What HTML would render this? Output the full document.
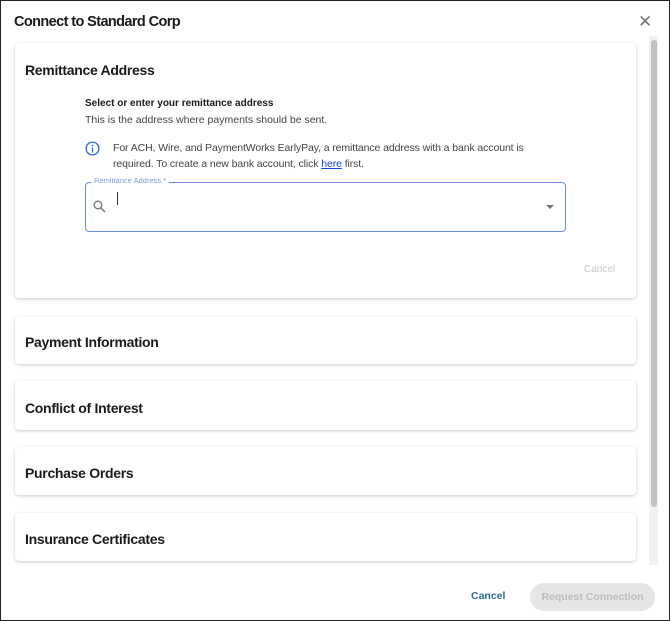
<!DOCTYPE html><html><head><style>
*{box-sizing:border-box;margin:0;padding:0}
body{width:670px;height:621px;background:#fff;font-family:"Liberation Sans",sans-serif;position:relative;overflow:hidden;color:#1a1a1a}
.frame{position:absolute;left:0;top:0;width:670px;height:621px;border:1px solid #222;pointer-events:none}
.t{position:absolute;left:14px;top:14px;font-size:14.5px;font-weight:bold;letter-spacing:-0.6px}
.x{position:absolute;left:638px;top:12px;font-size:17px;color:#777}
.card{position:absolute;left:15px;width:621px;background:#fff;border-radius:4px;box-shadow:0 1px 3px rgba(0,0,0,.22)}
.card h2{font-size:14px;font-weight:bold;position:absolute;left:10px;letter-spacing:-0.3px}
.s{position:absolute;font-size:10.5px}
.track{position:absolute;left:649px;top:36px;width:9px;height:529px;background:#f1f1f1}
.thumb{position:absolute;left:651px;top:40px;width:6px;height:467px;background:#c1c1c1;border-radius:3px}
</style></head><body>
<div class="t">Connect to Standard Corp</div>
<div class="x">✕</div>
<div class="track"></div><div class="thumb"></div>
<div class="card" style="top:43px;height:255px">
<h2 style="top:19px">Remittance Address</h2>
<div class="s" style="left:70px;top:55px;font-weight:bold;font-size:10px">Select or enter your remittance address</div>
<div class="s" style="left:70px;top:71px;color:#444">This is the address where payments should be sent.</div>
<svg style="position:absolute;left:70px;top:98px" width="15" height="15" viewBox="0 0 16 16"><circle cx="8" cy="8" r="6.8" fill="none" stroke="#2d6bd6" stroke-width="1.4"/><rect x="7.3" y="7" width="1.4" height="5" fill="#2d6bd6"/><circle cx="8" cy="4.8" r=".9" fill="#2d6bd6"/></svg>
<div class="s" style="left:98px;top:97px;color:#444;line-height:16px;white-space:nowrap;letter-spacing:-0.1px">For ACH, Wire, and PaymentWorks EarlyPay, a remittance address with a bank account is<br>required. To create a new bank account, click <span style="color:#1a47d6;text-decoration:underline">here</span> first.</div>
<div style="position:absolute;left:70px;top:139px;width:481px;height:50px;border:1.5px solid #6f8fdc;border-radius:4px"></div>
<div class="s" style="left:76px;top:133px;font-size:7.5px;color:#7f9ad8;background:#fff;padding:0 3px">Remittance Address *</div>
<svg style="position:absolute;left:78px;top:157px" width="13" height="13" viewBox="0 0 13 13"><circle cx="5" cy="5" r="3.8" fill="none" stroke="#777" stroke-width="1.4"/><line x1="7.8" y1="7.8" x2="12" y2="12" stroke="#777" stroke-width="1.5"/></svg>
<div style="position:absolute;left:102px;top:149px;width:1px;height:13px;background:#333"></div>
<div style="position:absolute;left:531px;top:162px;border:4px solid transparent;border-top:4px solid #777"></div>
<div class="s" style="left:569px;top:221px;color:#c8c8c8;font-size:10px">Cancel</div>
</div>
<div class="card" style="top:317px;height:47px"><h2 style="top:17px">Payment Information</h2></div>
<div class="card" style="top:381px;height:49px"><h2 style="top:19px">Conflict of Interest</h2></div>
<div class="card" style="top:447px;height:48px"><h2 style="top:18px">Purchase Orders</h2></div>
<div class="card" style="top:513px;height:48px"><h2 style="top:18px">Insurance Certificates</h2></div>
<div class="s" style="left:471px;top:590px;color:#2c6c93;font-weight:bold;font-size:10.5px">Cancel</div>
<div style="position:absolute;left:530px;top:583px;width:125px;height:28px;border-radius:14px;background:#e6e6e6;color:#bcbcbc;font-size:10.5px;font-weight:bold;text-align:center;line-height:28px">Request Connection</div>
<div class="frame"></div>
</body></html>
